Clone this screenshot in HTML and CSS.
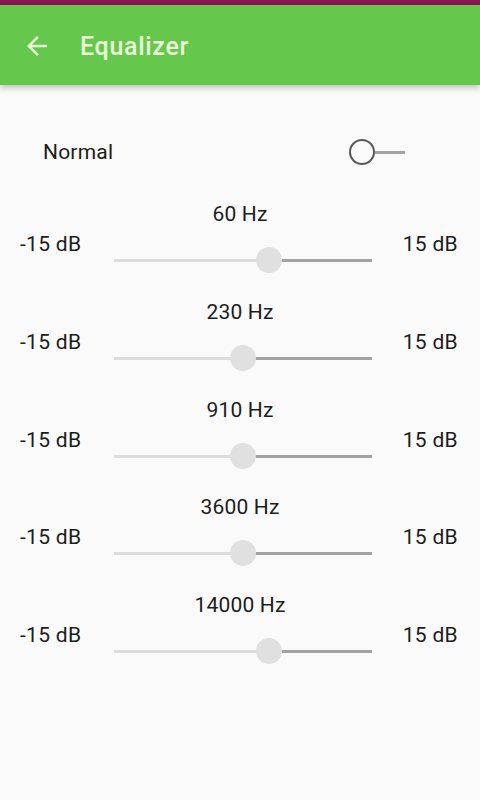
FILE: index.html
```html
<!DOCTYPE html>
<html>
<head>
<meta charset="utf-8">
<link rel="stylesheet" href="styles.css">
</head>
<body>
<div class="statusbar"></div>
<header class="toolbar">
  <svg class="back" width="30" height="30" viewBox="0 0 24 24"><path d="M20 11H7.83l5.59-5.59L12 4l-8 8 8 8 1.41-1.41L7.83 13H20v-2z" fill="currentColor"/></svg>
  <h1 class="title">Equalizer</h1>
</header>
<main class="content">
  <div class="preset-row">
    <span class="preset-label">Normal</span>
    <div class="switch"><span class="switch-knob"></span><span class="switch-track"></span></div>
  </div>
  <section class="band">
    <div class="freq">60 Hz</div>
    <div class="band-row">
      <span class="db">-15 dB</span>
      <div class="slider"><div class="track" style="--p:60%"></div><div class="thumb" style="left:calc(60% - 13px)"></div></div>
      <span class="db db-right">15 dB</span>
    </div>
  </section>
  <section class="band">
    <div class="freq">230 Hz</div>
    <div class="band-row">
      <span class="db">-15 dB</span>
      <div class="slider"><div class="track" style="--p:50%"></div><div class="thumb" style="left:calc(50% - 13px)"></div></div>
      <span class="db db-right">15 dB</span>
    </div>
  </section>
  <section class="band">
    <div class="freq">910 Hz</div>
    <div class="band-row">
      <span class="db">-15 dB</span>
      <div class="slider"><div class="track" style="--p:50%"></div><div class="thumb" style="left:calc(50% - 13px)"></div></div>
      <span class="db db-right">15 dB</span>
    </div>
  </section>
  <section class="band">
    <div class="freq">3600 Hz</div>
    <div class="band-row">
      <span class="db">-15 dB</span>
      <div class="slider"><div class="track" style="--p:50%"></div><div class="thumb" style="left:calc(50% - 13px)"></div></div>
      <span class="db db-right">15 dB</span>
    </div>
  </section>
  <section class="band">
    <div class="freq">14000 Hz</div>
    <div class="band-row">
      <span class="db">-15 dB</span>
      <div class="slider"><div class="track" style="--p:60%"></div><div class="thumb" style="left:calc(60% - 13px)"></div></div>
      <span class="db db-right">15 dB</span>
    </div>
  </section>
</main>
</body>
</html>
```
FILE: styles.css
```css
* { box-sizing: border-box; }
html, body { margin: 0; padding: 0; }
body {
  width: 480px;
  height: 800px;
  background: #fafafa;
  font-family: Roboto, "Noto Sans", sans-serif;
  color: #1c1c1c;
  overflow: hidden;
}
.statusbar {
  height: 6px;
  background: #8a1650;
  border-bottom: 1px solid #5e1a3a;
}
.toolbar {
  position: relative;
  z-index: 1;
  height: 80px;
  margin-top: -1px;
  background: #65c74b;
  display: flex;
  align-items: center;
  padding-left: 22px;
  color: #e9f7d9;
  box-shadow: 0 3px 6px rgba(0,0,0,0.22);
}
.back { display: block; margin-top: 2px; }
.title {
  margin: 2px 0 0 28px;
  font-size: 25px;
  font-weight: 500;
  letter-spacing: 0.7px;
}
.content {
  padding-top: 53px;
}
.preset-row {
  display: flex;
  align-items: center;
  height: 28px;
  padding: 0 75px 0 43px;
}
.preset-label {
  font-size: 21px;
  line-height: 28px;
  letter-spacing: 0.2px;
}
.switch {
  margin-left: auto;
  display: flex;
  align-items: center;
  margin-top: 0;
}
.switch-knob {
  width: 26px;
  height: 26px;
  border: 2.5px solid #585858;
  border-radius: 50%;
}
.switch-track {
  width: 30px;
  height: 3px;
  background: #a3a3a3;
}
.band {
  height: 97.75px;
}
.preset-row + .band { margin-top: 34px; }
.freq {
  text-align: center;
  font-size: 21px;
  line-height: 28px;
  letter-spacing: 0.2px;
}
.band-row {
  display: grid;
  grid-template-columns: 94px 258px 1fr;
  align-items: start;
  padding: 0 22px 0 20px;
}
.db {
  font-size: 21px;
  line-height: 28px;
  margin-top: 2px;
  letter-spacing: 0.3px;
}
.db-right { justify-self: end; }
.slider {
  position: relative;
  height: 26px;
  margin-top: 19px;
}
.track {
  position: absolute;
  left: 0;
  right: 0;
  top: 12px;
  height: 3px;
  background: linear-gradient(to right, #dcdcdc 0, #dcdcdc var(--p), #a2a2a2 var(--p), #a2a2a2 100%);
}
.thumb {
  position: absolute;
  top: 0;
  width: 26px;
  height: 26px;
  border-radius: 50%;
  background: #e0e0e0;
}
```
